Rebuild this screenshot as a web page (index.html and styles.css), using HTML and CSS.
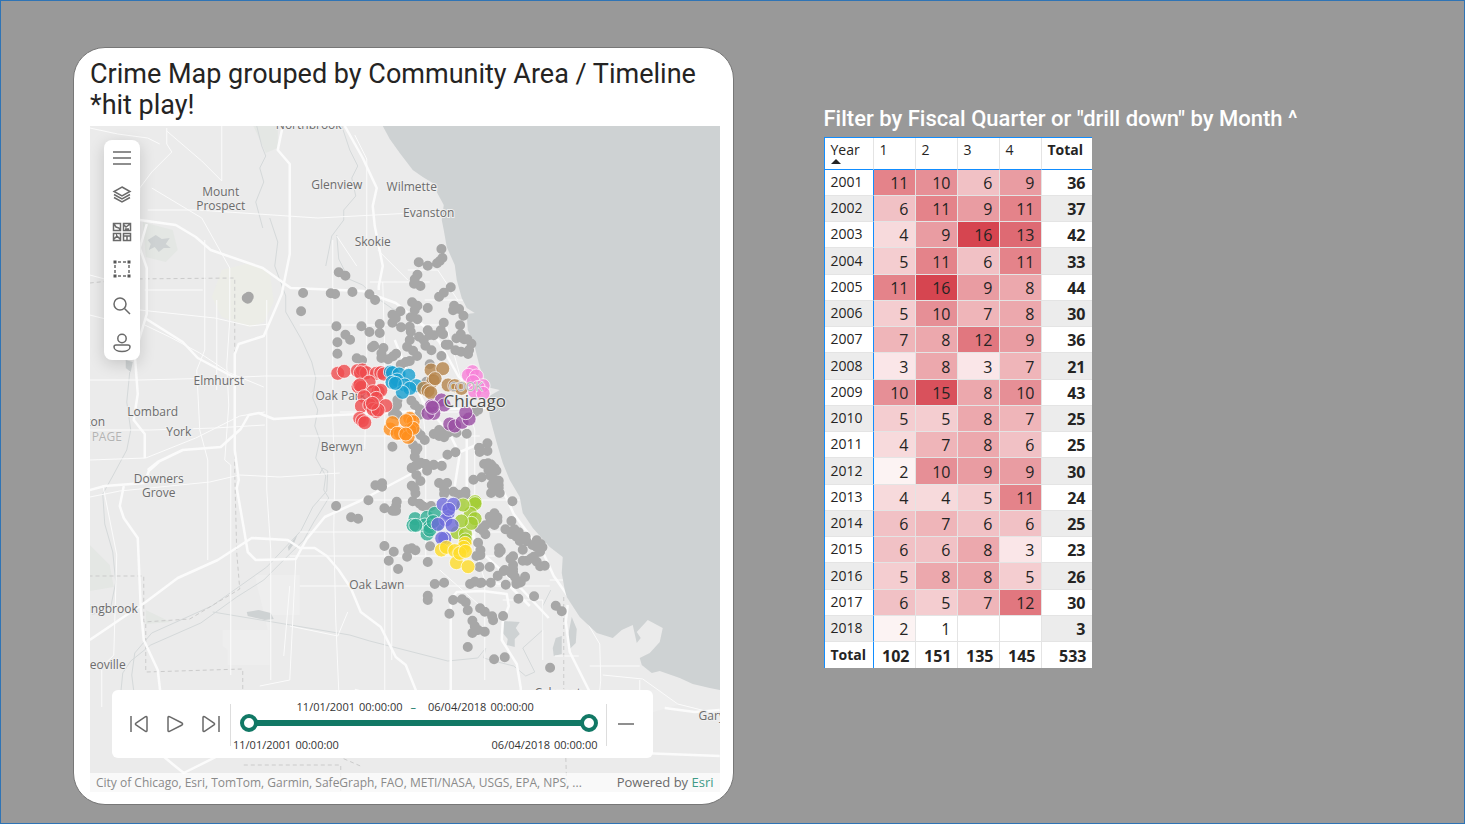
FILE: index.html
```html
<!DOCTYPE html>
<html lang="en">
<head>
<meta charset="utf-8">
<meta name="viewport" content="width=device-width, initial-scale=1">
<title>Chicago Crime Report</title>
<link rel="stylesheet" href="styles.css">
</head>
<body>
<main class="report">
  <section class="map-card">
    <h1 class="map-title">Crime Map grouped by Community Area / Timeline *hit play!</h1>
    <div class="map">
      <svg class="map-canvas" viewBox="90 126 630 666" preserveAspectRatio="xMidYMid slice" role="img" aria-label="Map of Chicago">
        <rect class="land" x="0" y="0" width="900" height="900"/>
        <g class="park">
          <path d="M222 270l28-7 20 9 4 30-10 20-14 5-28-10-10-20z"/>
          <path class="green" d="M143 222l30 8 5 20-12 12-20-5zM90 545l20 20 4 22-24 4zM146 610l25 12-25 2zM250 118l28 0 0 30-12 5z"/>
          <path class="pale" d="M255 575h45v40h-30v50h-42v-15l-5-4v-16h45zM640 690l20 0 18 15-28 8z"/>
        </g>
        <path class="water" d="M148 240l8-5 6 4 8-1-4 6 5 4-7 0-5 4-4-5-6 3 2-6zM126 360l7 2-2 10-5-4zM247 612l12-2 12 3 3 6-9 1-17-4zM288 547l10-13-4 10-5 7zM504 621l16 1-4 6 4 6-5 5 0 8-8-2 1-6-5-6zM556 638l6-2 0 18-8 2-1-8zM572 617l5 12-1 14-6 6-2-12z"/>
        <g class="river">
          <path d="M270 218l8 24-3 24 11 30 0 16 16 28 10 22 4 16-3 20 5 12-3 16 5 14-4 18 10 18-2 14 5 8-15 24-10 18-40 40-27 17-36 26-50 22-20 16-8 12-3 30 4 40"/>
          <path d="M320 474l3-6 5 3-1 20-14 16-12 24-34 36-55 39-60 27-17 20-3 22 4 32"/>
          <path d="M257 126l5 20 4 10-6 12 4 14-8 20 7 26M342 126l8 24 8 16-6 12 4 18-12 14 0 10-12 16-6 30M337 235l2 24 10 20 14 6 10 10 20 14 12 3M130 372l-2 20-1 10 4 28-4 20-14 26-10 18 2 30 8 28 3 30-6 30-18 2M213 612l60 10 77 13 20 6 78 20 30-3 8-10-2 10 14 4 16 4 12 10 9-4-12-24 20-18 0-24 8-16"/>
        </g>
        <g class="county">
          <path d="M90 283l40-4 105-1v195l2 80 3 36-50 30-46 3 0-46-54 0M146 624v48l97-3v46l120 52M564 597v92l3 100M244 765h97v30"/>
        </g>
        <g class="road minor">
          <path d="M90 380h50l80-2 45-2 60 0 90-2M90 460l56-2 50-20 44-22 25-4M90 497l30-6 90-9 30-7 40 2 60-4M90 430l60 0 65-2 50-3M145 290h58M145 325l25 12 30 16 30 20 34 14M90 275l30 8 20 16M222 126h0v55l-20-20-35-30M90 128l28 6 30 4 12 6M167 128l0 16 5 8-20 20-12 16-2 60-6 36M148 210h50l120 8 95-5M355 135l12 24v120l0 80-2 90M152 188l50 30 28 50v52l-3 45 2 40-4 55 6 5v210M267 300v70l0 70 0 50 4 60 0 130M333 240v180l2 60-1 50 2 90 4 95M205 240l0 110-8 20 3 60 8 30v100M383 282l2 70v110l0 100 0 180M217 300v90M408 270h30l20 30M425 300h42M370 282h60M300 325h145M290 556h80l80 0h80M300 586h250M290 626l48 10 10-24M290 586l-6 70M337 236l20 30M378 250l30 30M445 320l30 110v120l10 30v100M420 380l6 60 0 120M300 436h180M340 412h140M320 500h200M300 532h220M392 550v110"/>
          <path d="M103 485l14 70-3 100-12 12v40M296 560l-6 120-30 6M550 580h16l14 30 20 34 1 36-2 20M555 656h24M590 666h50M603 675l40 4 35 25 40 10M640 680v14M350 690l8 30M440 570l45 40M503 600h40v60M90 315l20 5 30-10 75 8 35 8 20-2"/>
        </g>
        <g class="road main">
          <path d="M283 126l-5 24 12 14v90l-8 40-18 42-25 8-4 10v96l4 30-2 8 7 40 4 24 8 8 40-1 11-20 18-22 35-16 53-28 8-4 60-26"/>
          <path d="M140 220l36 5 20 12 15 13 52 18 28 20 72 3 33 12 23 18 20 20 20 36 30 22M90 490l15-4 40-3 4-12 10-9M145 458v-24l-11-14 4-26-3-40 12-40 0-46-7-20 7-24M145 318l38 24 15 16 30 16 16 8M90 640l56-38 32-24 40-18 34-22 36 2 12 8 15 0 12 8 12 14 12 18 10 24 20 15 15 30 10 8 12 30 20 10M124 486l-4 20 4 12 14 20 3 70 3 32 14 30 3 26M148 470l10-8 25-12 38-3 20-18 8-14 10-2 15 6 63-4 50-2 60-4 60-2"/>
          <path d="M345 126l18 32 14 30-4 18 2 20 8 40-4 20 0 4M467 420l0 100 12 30 40 36 30 32M494 470l20 44 30 40 10 22 24 34M568 605l-2 17 4 30 14 28 10 20M451 600v90l-20 14-40 22M451 600l6-8 26-1 24 3 2 12-6 16-1 18 15 24 4 24v24M395 340l12 30 18 34 25 30 10 20-5 32M150 745l24 20 10 8 40-20M355 690l30 8 40 4 60-4M665 708l30 4 25-2M640 753l80 3M480 580l30 6 20 20"/>
        </g>
        <path class="water" d="M383 126L390 139 400 153 413 170 423 177 433 183 437 192 444 205 442 220 444 230 447 247 455 265 457 280 462 298 467 308 475 313 467 314 468 330 474 343 480 367 487 387 500 390 488 397 490 417 497 443 503 463 510 480 520 497 523 513 533 528 550 547 563 557 562 573 565 590 567 597 580 617 597 633 613 638 622 630 633 625 637 643 641 638 637 632 648 620 663 628 660 642 650 653 640 658 642 665 652 673 660 671 680 678 693 684 710 688 720 690H740V126Z"/>
        <g class="place">
          <text x="309" y="129">Northbrook</text>
          <text x="221" y="196">Mount</text><text x="221" y="210">Prospect</text>
          <text x="337" y="189">Glenview</text><text x="412" y="191">Wilmette</text>
          <text x="429" y="217">Evanston</text><text x="373" y="246">Skokie</text>
          <text x="219" y="385">Elmhurst</text><text x="153" y="416">Lombard</text>
          <text x="179" y="436">York</text><text x="96" y="426">ton</text>
          <text class="county-name" x="107" y="441">PAGE</text>
          <text x="342" y="451">Berwyn</text>
          <text x="159" y="483">Downers</text><text x="159" y="497">Grove</text>
          <text x="377" y="589">Oak Lawn</text><text x="113" y="613">ingbrook</text>
          <text x="108" y="669">eoville</text><text x="558" y="697">Calumet</text><text x="712" y="720">Gary</text>
          <text x="341" y="400">Oak Park</text>
        </g>
        <g id="incidents"></g>
        <g class="place">
          <text class="county-name" x="466" y="391">COOK</text>
          <text class="city" x="475" y="407">Chicago</text>
        </g>
      </svg>
      <div class="map-tools" role="toolbar" aria-label="Map tools">
        <button type="button" aria-label="Menu"><svg viewBox="0 0 20 20"><path d="M1 4h18M1 10h18M1 16h18"/></svg></button>
        <button type="button" aria-label="Layers"><svg viewBox="0 0 20 20"><path d="M10 2l8 4.500-8 4.500-8-4.500zM2 9.500l8 4.500 8-4.500M2 12.500l8 4.500 8-4.500"/></svg></button>
        <button type="button" aria-label="Basemap"><svg viewBox="0 0 20 20"><path d="M1.500 1.500h7v7h-7zM11.500 1.500h7v7h-7zM1.500 11.500h7v7h-7zM11.500 11.500h7v7h-7zM2 2l2 3 3 1 1 2M12 3l2 2 4-3M13 7h4M2 17l3-3 3 3M4 13h1M12 14h6M15 14v4"/></svg></button>
        <button type="button" aria-label="Select"><svg viewBox="0 0 20 20"><path d="M6 3h3M11 3h3M6 17h3M11 17h3M3 6v3M3 11v3M17 6v3M17 11v3"/><path class="solid" d="M1.500 1.500h3v3h-3zM15.500 1.500h3v3h-3zM1.500 15.500h3v3h-3zM15.500 15.500h3v3h-3z"/></svg></button>
        <button type="button" aria-label="Search"><svg viewBox="0 0 20 20"><circle cx="8" cy="8" r="6"/><path d="M12.500 12.500L18 18"/></svg></button>
        <button type="button" aria-label="Sign in"><svg viewBox="0 0 20 20"><circle cx="10" cy="5.500" r="4.200"/><path d="M4 12h12q2 0 2 2c0 3-4 4.500-8 4.500S2 17 2 14q0-2 2-2z"/></svg></button>
      </div>
      <div class="timeline">
        <div class="playback">
          <button type="button" aria-label="Previous"><svg viewBox="0 0 20 20"><path d="M2 2v16M18 3.500v13q0 1.500-1.500.8L7 11q-1.200-1 0-2l9.500-6.300Q18 2 18 3.500z"/></svg></button>
          <button type="button" aria-label="Play"><svg viewBox="0 0 20 20"><path d="M3 3.500v13q0 1.500 1.500.8L17 11q1.200-1 0-2L4.500 2.700Q3 2 3 3.500z"/></svg></button>
          <button type="button" aria-label="Next"><svg viewBox="0 0 20 20"><path d="M18 2v16M2 3.500v13q0 1.500 1.500.8L13 11q1.200-1 0-2L3.500 2.700Q2 2 2 3.500z"/></svg></button>
        </div>
        <div class="range">
          <div class="range-now"><span class="stamp"><span>11/01/2001</span><span>00:00:00</span></span><span class="dash">–</span><span class="stamp until"><span>06/04/2018</span><span>00:00:00</span></span></div>
          <div class="slider">
            <input type="range" min="0" max="100" value="0" aria-label="Start date">
            <input type="range" min="0" max="100" value="100" aria-label="End date">
          </div>
          <div class="range-ends"><span class="stamp"><span>11/01/2001</span><span>00:00:00</span></span><span class="stamp"><span>06/04/2018</span><span>00:00:00</span></span></div>
        </div>
        <button type="button" class="collapse" aria-label="Collapse"><svg viewBox="0 0 20 20"><path d="M2 10h16"/></svg></button>
      </div>
      <div class="credits">
        <span class="sources">City of Chicago, Esri, TomTom, Garmin, SafeGraph, FAO, METI/NASA, USGS, EPA, NPS, ...</span>
        <span class="powered">Powered by <a href="#esri">Esri</a></span>
      </div>
    </div>
  </section>
  <section class="matrix-panel">
    <h2 class="matrix-title">Filter by Fiscal Quarter or "drill down" by Month ^</h2>
    <table class="matrix">
      <thead><tr><th class="year" scope="col">Year<span class="sort"></span></th><th scope="col">1</th><th scope="col">2</th><th scope="col">3</th><th scope="col">4</th><th class="sum" scope="col">Total</th></tr></thead>
      <tbody>
        <tr><th scope="row">2001</th><td class="v11">11</td><td class="v10">10</td><td class="v6">6</td><td class="v9">9</td><td class="sum">36</td></tr>
        <tr><th scope="row">2002</th><td class="v6">6</td><td class="v11">11</td><td class="v9">9</td><td class="v11">11</td><td class="sum">37</td></tr>
        <tr><th scope="row">2003</th><td class="v4">4</td><td class="v9">9</td><td class="v16">16</td><td class="v13">13</td><td class="sum">42</td></tr>
        <tr><th scope="row">2004</th><td class="v5">5</td><td class="v11">11</td><td class="v6">6</td><td class="v11">11</td><td class="sum">33</td></tr>
        <tr><th scope="row">2005</th><td class="v11">11</td><td class="v16">16</td><td class="v9">9</td><td class="v8">8</td><td class="sum">44</td></tr>
        <tr><th scope="row">2006</th><td class="v5">5</td><td class="v10">10</td><td class="v7">7</td><td class="v8">8</td><td class="sum">30</td></tr>
        <tr><th scope="row">2007</th><td class="v7">7</td><td class="v8">8</td><td class="v12">12</td><td class="v9">9</td><td class="sum">36</td></tr>
        <tr><th scope="row">2008</th><td class="v3">3</td><td class="v8">8</td><td class="v3">3</td><td class="v7">7</td><td class="sum">21</td></tr>
        <tr><th scope="row">2009</th><td class="v10">10</td><td class="v15">15</td><td class="v8">8</td><td class="v10">10</td><td class="sum">43</td></tr>
        <tr><th scope="row">2010</th><td class="v5">5</td><td class="v5">5</td><td class="v8">8</td><td class="v7">7</td><td class="sum">25</td></tr>
        <tr><th scope="row">2011</th><td class="v4">4</td><td class="v7">7</td><td class="v8">8</td><td class="v6">6</td><td class="sum">25</td></tr>
        <tr><th scope="row">2012</th><td class="v2">2</td><td class="v10">10</td><td class="v9">9</td><td class="v9">9</td><td class="sum">30</td></tr>
        <tr><th scope="row">2013</th><td class="v4">4</td><td class="v4">4</td><td class="v5">5</td><td class="v11">11</td><td class="sum">24</td></tr>
        <tr><th scope="row">2014</th><td class="v6">6</td><td class="v7">7</td><td class="v6">6</td><td class="v6">6</td><td class="sum">25</td></tr>
        <tr><th scope="row">2015</th><td class="v6">6</td><td class="v6">6</td><td class="v8">8</td><td class="v3">3</td><td class="sum">23</td></tr>
        <tr><th scope="row">2016</th><td class="v5">5</td><td class="v8">8</td><td class="v8">8</td><td class="v5">5</td><td class="sum">26</td></tr>
        <tr><th scope="row">2017</th><td class="v6">6</td><td class="v5">5</td><td class="v7">7</td><td class="v12">12</td><td class="sum">30</td></tr>
        <tr><th scope="row">2018</th><td class="v2">2</td><td class="v1">1</td><td class="v1"></td><td class="v1"></td><td class="sum">3</td></tr>
        <tr class="grand"><th scope="row">Total</th><td>102</td><td>151</td><td>135</td><td>145</td><td class="sum">533</td></tr>
      </tbody>
    </table>
  </section>
</main>
<script src="incidents.js"></script>
</body>
</html>
```

FILE: styles.css
```css
* { box-sizing: border-box; }
body { margin: 0; background: #999; color: #252423; font-family: "Open Sans", "Noto Sans", sans-serif; }
button { display: grid; place-items: center; padding: 0; border: 0; background: none; cursor: pointer; }
button svg { width: 20px; height: 20px; fill: none; stroke: #6a6a6a; stroke-width: 1.5; }

.report { display: flex; align-items: stretch; gap: 90px; min-height: 100vh; padding: 46px 70px 18px 72px; border: 1px solid #2f74b5; }

.map-card { flex: 0 0 50%; display: flex; flex-direction: column; padding: 11px 13px 12px 16px; border: 1px solid #777; border-radius: 32px; background: #fff; }
.map-title { margin: 0 0 5px; font: 400 27px/31px Roboto, sans-serif; }
.map { position: relative; flex: 1; min-height: 480px; overflow: hidden; }
.map-canvas { position: absolute; inset: 0; width: 100%; height: 100%; }

.land { fill: #ebebeb; }
.water { fill: #ced2d3; }
.park path { fill: #ecede7; }
.park .green { fill: #e4e7e4; }
.park .pale { fill: #eeeeee; }
.river { fill: none; stroke: #d5d9da; stroke-width: 1; }
.county { fill: none; stroke: #cbcbcb; stroke-width: 1; stroke-dasharray: 4 3; }
.road { fill: none; stroke: #fbfbfb; stroke-linejoin: round; }
.road.minor { stroke-width: 1; }
.road.main { stroke-width: 2.5; }
.place { fill: #6c6c6c; stroke: #efefef; stroke-width: 2; paint-order: stroke; font-size: 12px; text-anchor: middle; }
.place .city { fill: #4e4e4e; font-size: 17px; }
.place .county-name { fill: #b3b3b3; stroke-width: 1; }
.other { fill: none; stroke: #a7a7a7; stroke-width: 10; stroke-linecap: round; }
.area circle { stroke: #fff; stroke-opacity: .7; stroke-width: 1; fill-opacity: .8; }

.map-tools { position: absolute; left: 14px; top: 14px; display: flex; flex-direction: column; gap: 2px; border-radius: 8px; background: #fff; box-shadow: 0 4px 16px rgba(0, 0, 0, .16); }
.map-tools button { width: 36px; height: 35px; }
.map-tools .solid { fill: #555; stroke: none; }

.timeline { position: absolute; left: 22px; right: 67px; bottom: 34px; display: flex; align-items: center; height: 68px; border-radius: 6px; background: #fff; }
.playback { display: flex; gap: 16px; padding: 0 9px 0 17px; }
.range { flex: 1; align-self: stretch; margin: 14px 0 12px; padding: 0 8px 0 2px; border: solid #ddd; border-width: 0 1px; font-size: 11px; line-height: 14px; color: #333; }
.range-now { display: flex; justify-content: center; gap: 8px; margin-top: -4px; }
.range-now .until { margin-left: 4px; }
.dash { color: #117865; }
.slider { display: grid; align-items: center; height: 18px; margin: 0 0 6px 7px; }
.slider input { grid-area: 1 / 1; appearance: none; width: 100%; height: 18px; margin: 0; background: linear-gradient(#117865, #117865) center / calc(100% - 12px) 6px no-repeat; pointer-events: none; }
.slider input + input { background: none; }
.slider input::-webkit-slider-thumb { appearance: none; width: 18px; height: 18px; border: 4px solid #117865; border-radius: 50%; background: #fff; pointer-events: auto; }
.range-ends { display: flex; justify-content: space-between; }
.stamp { display: flex; gap: 4px; }
.collapse { width: 20px; margin: 0 17px 0 9px; }

.credits { position: absolute; left: 0; right: 0; bottom: 0; display: flex; justify-content: space-between; gap: 12px; padding: 0 6px; background: rgba(255, 255, 255, .7); font-size: 13px; line-height: 19px; color: #8a8a8a; white-space: nowrap; }
.sources { overflow: hidden; font-size: 12px; text-overflow: ellipsis; }
.powered { color: #6b6b6b; }
.powered a { color: #3f9a87; text-decoration: none; }

.matrix-panel { padding-top: 58px; }
.matrix-title { margin: 0 0 4px; font: 500 22px/28px Roboto, sans-serif; color: #fff; }
.matrix { border-collapse: separate; border-spacing: 0; border-top: 1px solid #118dff; border-left: 1px solid #118dff; background: #fff; font-size: 14px; line-height: 19px; }
.matrix th, .matrix td { height: 26px; padding: 2px 6px 0 0; border-right: 1px solid #e4e4e4; border-bottom: 1px solid #e4e4e4; font-weight: 400; text-align: right; vertical-align: middle; }
.matrix td { width: 42px; font-size: 16px; }
.matrix tr:nth-child(4n) td { height: 27px; }
.matrix tbody th { width: 49px; padding: 0 0 2px 6px; border-right: 1px solid #118dff; text-align: left; }
.matrix thead th { height: 32px; padding: 2px 6px 0; border-bottom: 1px solid #118dff; text-align: left; vertical-align: top; }
.matrix .sum { width: 50px; font-weight: 700; border-right: 0; }
.matrix thead .sum { padding: 2px 0 0 6px; }
.matrix tbody tr:nth-child(even) th, .matrix tbody tr:nth-child(even) .sum { background: #ececec; }
.matrix .grand th, .matrix .grand td { padding-right: 5px; border-bottom: 0; font-weight: 700; }
.sort { display: block; width: 0; border: solid transparent; border-width: 0 5px 5px; border-bottom-color: #252423; }
.v1 { background: #fff; }
.v2 { background: #fcf3f3; }
.v3 { background: #fae6e8; }
.v4 { background: #f7dadc; }
.v5 { background: #f4cdd0; }
.v6 { background: #f1c1c5; }
.v7 { background: #efb5b9; }
.v8 { background: #eca8ad; }
.v9 { background: #e99ca2; }
.v10 { background: #e68f96; }
.v11 { background: #e4838a; }
.v12 { background: #e1777f; }
.v13 { background: #de6a73; }
.v15 { background: #d9515c; }
.v16 { background: #d64550; }

@media (max-width: 1180px) {
  .report { flex-direction: column; gap: 24px; padding: 24px; }
  .map-card { flex: none; }
}
```

FILE: incidents.js
```js
// Each group holds an origin on the map and offsets in thirds of a map unit.
const others = [
  { at: [300, 230], pts: "10,189 4,244 117,127 137,137 93,190 106,192 158,186 209,193 226,210 425,57 428,84 420,93 412,100 357,97 384,107 353,134 345,148 343,161 362,168 453,172 432,188 418,200 337,217 353,227 384,234 345,240 333,262 353,268 302,244 278,254 278,278 288,265 304,292 330,290 110,289 185,289 240,282 240,309 209,306 137,314 151,329 113,337 113,371 217,352 223,347 251,354 245,370 245,384 265,388 280,379 289,371 171,385 187,391 463,227 460,241 478,237 491,257 432,278 481,286 384,301 390,315 402,316 423,301 430,313 333,305 358,320 372,330 330,330 322,350 340,362 352,378 377,347 395,361 425,378 470,325 483,313 493,328 503,328 515,341 438,344 446,344 467,361 484,365 505,372 508,360 303,404 318,396 330,393 390,403" },
  { at: [310, 350], pts: "350,95 263,150 262,165 255,180 263,195 305,152 315,165 330,178 328,195 250,192 505,180 497,185 322,245 333,256 345,270 372,252 388,240 388,258 405,245 403,262 415,248 440,248 471,251 248,290 310,285 323,295 318,303 315,320 413,314 437,307 533,280 508,293 510,306 533,303 306,353 323,345 345,342 372,345 396,348 535,340 545,345 523,342 555,355" },
  { at: [320, 460], pts: "276,25 290,14 303,8 318,12 322,32 342,14 366,17 290,45 302,63 276,77 285,87 287,100 358,69 382,69 373,88 373,102 401,95 417,104 437,95 437,104 279,124 300,131 308,138 320,143 334,138 461,59 486,52 501,13 513,13 506,30 530,32 513,48 520,55 516,75 537,76 537,62 514,99 526,90 540,99 537,85 578,124 187,70 187,80 167,76 146,121 49,138 94,172 115,176 194,145 231,125 229,138 218,152 229,152 524,160 515,175 533,182 524,195 510,170 533,172 575,183 479,205 497,196 490,212 497,223 475,248 482,270 482,285 470,288 557,208 584,208 575,222 590,230 597,217 600,243 618,230 620,243 651,241 663,252 668,262 651,262 661,275 638,255 609,269 538,265 538,278 543,272 194,258 222,275 207,302 262,290 265,268 276,265 287,271 235,327 331,259 324,306 479,321 510,321 580,289 572,296 609,302 622,302 635,295 642,290 651,305 661,319 675,317 555,330 580,315 580,328 575,340 616,351 534,348 513,368 558,374 590,360 590,372 603,367 345,372 373,368 451,372 466,365 485,368" },
  { at: [340, 570], pts: "264,77 264,90 391,42 405,35 421,39 453,38 474,17 492,3 520,5 525,20 498,44 556,20 530,38 540,38 340,90 367,88 378,97 384,121 329,131 421,115 435,125 457,139 460,151 490,138 398,152 405,168 398,189 415,180 435,185 384,231 463,268 495,262 536,86 583,79 648,107 666,124 631,293" },
  { at: [0, 0], pts: "741,894 747,890 744,896" }
];
const areas = [
  { at: [310, 350], color: "#ef4b4d", pts: "84,70 103,64 143,62 158,60 170,68 152,68 200,70 213,68 222,72 178,96 145,110 155,112 150,105 205,125 213,121 190,125 200,145 163,140 155,168 180,165 228,167 200,185 150,205 158,212 165,218 190,178 205,180 188,160" },
  { at: [310, 350], color: "#179fd0", pts: "242,66 248,68 268,72 297,76 262,90 247,97 285,105 320,107 300,115 278,127 257,100" },
  { at: [310, 350], color: "#b5854b", pts: "364,60 399,56 370,92 376,86 342,115 355,122 363,128 415,105 435,107 455,115" },
  { at: [310, 350], color: "#f781d8", pts: "488,65 476,76 500,78 490,95 520,107 505,112 495,125 520,130" },
  { at: [310, 350], color: "#984ea3", pts: "395,150 403,165 372,190 355,190 365,168 368,172 420,222 435,228 457,217 478,207 468,188" },
  { at: [310, 350], color: "#ff8f1c", pts: "241,237 248,218 300,205 310,215 300,240 272,250 262,250 295,262 310,235 289,212 288,252" },
  { at: [320, 460], color: "#2fae94", pts: "286,176 322,172 322,222 315,195 345,160 330,200 350,195 330,210 340,185 280,196 288,196" },
  { at: [320, 460], color: "#a1cc2f", pts: "466,125 466,131 452,160 430,135 412,218 437,222 466,176 455,190 437,240 425,183" },
  { at: [320, 460], color: "#6f6bdb", pts: "385,160 378,180 397,196 370,133 401,133 387,148 355,193 375,235 366,235" },
  { at: [320, 460], color: "#ffdc28", pts: "365,270 380,262 436,250 432,262 405,272 410,308 445,320 420,280 437,274" }
];
const place = ({ at, pts }) => pts.split(" ").map(p => p.split(",").map((n, i) => at[i] + n / 3));
const dots = others.map(g => place(g).map(([x, y]) => `M${x} ${y}h0`).join("")).join("");
const clusters = areas.map(g => `<g class="area" fill="${g.color}">` +
  place(g).map(([x, y]) => `<circle cx="${x}" cy="${y}" r="7"/>`).join("") + "</g>").join("");
document.getElementById("incidents").innerHTML = `<path class="other" d="${dots}"/>${clusters}`;
```
